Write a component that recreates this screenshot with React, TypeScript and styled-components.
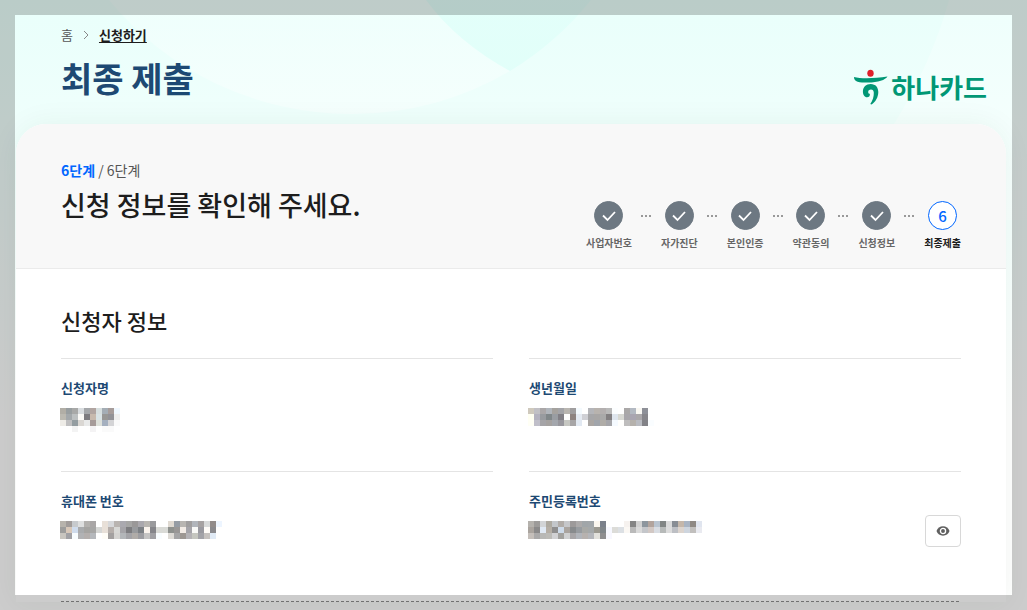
import React from "react";
import styled, { createGlobalStyle } from "styled-components";

const GlobalStyle = createGlobalStyle`
  *, *::before, *::after { box-sizing: border-box; }
  body {
    margin: 0;
    background: #fff;
    color: #1d1d1d;
    font-family: "Noto Sans CJK KR", "Noto Sans", sans-serif;
  }
  h1, h2, h3, p, ol, dl, dd { margin: 0; padding: 0; }
`;

const Page = styled.div`
  position: relative;
  min-height: 100vh;
  overflow: hidden;
  background: linear-gradient(#e9fffb 0, #effffc 120px, #ffffff 420px);
`;

const Backdrop = styled.svg`
  position: absolute;
  top: 0;
  left: 0;
`;

const Frame = styled.div`
  position: fixed;
  inset: 0;
  border: 15px solid rgba(0, 0, 0, 0.2);
  pointer-events: none;
`;

const Header = styled.header`
  position: relative;
  display: flex;
  justify-content: space-between;
  align-items: flex-end;
  padding: 25px 40px 18px 61px;
`;

const Crumbs = styled.nav`
  display: flex;
  align-items: center;
  gap: 8px;
  font-size: 13px;
  line-height: 20px;
`;

const CrumbLink = styled.a<{ $current?: boolean }>`
  color: ${(p) => (p.$current ? "#1d1d1d" : "#555")};
  font-weight: ${(p) => (p.$current ? 700 : 400)};
  text-decoration: ${(p) => (p.$current ? "underline" : "none")};
  text-underline-offset: 2px;
`;

const PageTitle = styled.h1`
  margin: 7px 0 2px;
  color: #1d4973;
  font-size: 34px;
  line-height: 52px;
  font-weight: 700;
`;

const Logo = styled.a`
  display: flex;
  align-items: center;
  gap: 3px;
  color: #009775;
  font-size: 26px;
  line-height: 38px;
  font-weight: 700;
  text-decoration: none;
`;

const Card = styled.main`
  position: relative;
  margin: 0 21px 0 16px;
  border-radius: 30px 30px 0 0;
  background: #fff;
  box-shadow: 0 0 30px rgba(0, 60, 40, 0.06);
`;

const StepHeader = styled.section`
  display: flex;
  justify-content: space-between;
  align-items: flex-end;
  padding: 35px 45px 17px;
  border-bottom: 1px solid #ebebeb;
  border-radius: 30px 30px 0 0;
  background: #f8f8f8;
`;

const StepCopy = styled.div`
  padding-bottom: 26px;
`;

const StepCount = styled.p`
  color: #555;
  font-size: 14px;
  line-height: 22px;

  strong {
    color: #0066ff;
    font-weight: 700;
  }
`;

const StepTitle = styled.h2`
  margin-top: 3px;
  font-size: 27px;
  line-height: 41px;
  font-weight: 500;
`;

const Steps = styled.ol`
  display: flex;
  list-style: none;
`;

const Step = styled.li<{ $current: boolean }>`
  display: flex;
  flex-direction: column;
  align-items: center;
  gap: 5px;
  color: ${(p) => (p.$current ? "#1d1d1d" : "#666")};
  font-size: 10px;
  line-height: 16px;
  font-weight: 700;
  white-space: nowrap;
`;

const StepMark = styled.span<{ $current: boolean }>`
  display: flex;
  align-items: center;
  justify-content: center;
  width: 29px;
  height: 29px;
  border: 1px solid ${(p) => (p.$current ? "#0066ff" : "#6d7882")};
  border-radius: 50%;
  background: ${(p) => (p.$current ? "#fff" : "#6d7882")};
  color: #0066ff;
  font-size: 15px;
  font-weight: 500;
`;

const StepDots = styled.li`
  display: flex;
  align-items: center;
  height: 29px;
  margin: 0 10px 0 9px;
`;

const Content = styled.section`
  padding: 34px 45px 0;
`;

const SectionTitle = styled.h3`
  font-size: 22px;
  line-height: 34px;
  font-weight: 500;
`;

const InfoGrid = styled.dl`
  display: grid;
  grid-template-columns: 1fr 1fr;
  column-gap: 36px;
  margin-top: 21px;
`;

const InfoItem = styled.div`
  height: 113px;
  padding-top: 19px;
  border-top: 1px solid #e4e4e4;
`;

const InfoLabel = styled.dt`
  color: #1d4973;
  font-size: 13px;
  line-height: 20px;
  font-weight: 700;
`;

const InfoValue = styled.dd`
  display: flex;
  justify-content: space-between;
  align-items: flex-start;
  padding-top: 4px;
`;

const MaskArt = styled.svg`
  display: block;
  margin: 6px 0 0 -1px;
`;

const RevealButton = styled.button`
  display: flex;
  align-items: center;
  justify-content: center;
  width: 36px;
  height: 32px;
  padding: 0;
  border: 1px solid #d8d8d8;
  border-radius: 4px;
  background: #fff;
  cursor: pointer;
`;

const Divider = styled.div`
  height: 1px;
  margin: 17px 45px 8px;
  background: repeating-linear-gradient(90deg, #8e8e8e 0 3px, transparent 3px 5px);
`;

const CELL = 6;

type Mosaic = string[];

const NAME: Mosaic = [
  "b1aea6 989ea0 a8a9a8 d9dde0 a4a7aa b1a5a1 d7dfdf a4adb5 a69c9a f0f8ff",
  "bbb9b1 a3a8ab bcc0c1 fbfaf7 7d7c80 c7b9ad d9e3e5 989795 929297 eeeeee",
  "eeece7 bfbfc0 949da1 dad7d3 e9eaea a69b99 dde0da a5b0bf d4d4d6 fafafa",
  "ffffff ffffff f3f3f3 ffffff ffffff f4f3f4 ffffff fafafa fafafa ffffff",
];

const BIRTH: Mosaic = [
  "cfc9bd c1c0c5 aaa7a8 b0b5bb a5a29e a3a4a8 b9b6b1 a09e9f f4fafe ffffff b4b5b9 b8b3ae b3afaf b9b9b9 fcfeff ffffff aaa8a8 b3b9c2 f9f7f2 8e9098 ffffff",
  "fffff2 b4b2bf 989b9f 808789 999da2 817f85 fefefe 8e8380 e5ebf3 cfd0d5 a6a6a8 a8a6a5 a9a9a9 827f81 dfe6ee d8d9d3 a9a7ab a9a5b1 aaa7aa 87868b ffffff",
  "fffff5 c0bfc9 a5a4a7 a5a2a0 a4a7ad 98979d c6c7c2 a7a5a6 e2e9f2 ffffff aaa6a3 a1a5ab afaca7 a5a5a9 f5faff fffffd bebdbd b5b1ac b9bbc1 828287 fafdff",
];

const PHONE: Mosaic = [
  "b7b3ac a19c9a c7cacd dedfdf b3b1ae a9a6a6 ffffff e8e0d8 d7d8da b9b4b0 aaa9af a6a6a5 9a9898 aaa8ad b9b6b1 9a9a9d ffffff ffffff e0dad2 959ca4 b8b5b1 a09e9e b1b5bb a6a2a2 d8dada 918b8a edf5ff",
  "9d9d9c d8c8b9 cfdced a9abad a5a4a1 a6a6a5 d6d7d5 e8e0d8 b6afab d8d8d5 a5a4a8 7d7d80 989a9d 7d8185 fbf4ed 85858a d9dad6 d9dad6 8e918e 999796 f3ece6 a5a4a9 f9f9f7 9a9aa0 fffcf8 89898d ffffff",
  "c8c5bf a1a1a5 f8fdff b1b2b4 b4afad b5b8bc ffffff fffdf7 a3a09f d5d4d1 b3b6b9 a3a3a7 b0aca8 9d9da1 c5c4c3 a0a0a4 f9fdff ffffff dedbd6 a5a5a6 9d9792 b4b2b5 c5c6bf a3a3a8 c6c2bf e0eaf5 ffffff",
];

const RESIDENT: Mosaic = [
  "b5b2ad 9d9b99 d2d4d6 aeaaa1 c3c6ca b1aca8 c6c7ca 9d9a9a acaaaa a1a6a9 a2a7aa fbf7ef 7b818b ffffff ffffff ffffff f6f2ef 858585 d1d1d1 8d969e b2a49d b9c4d0 818584 dadada 888d94 c5b7aa a9b4c3 8f8984 e0e5ef",
  "aaa49e 8a8989 e0e9f4 b5aea5 8f8e8e cedbea aaa49f 888b8d 989ca0 a8a9a6 a5a9aa 9c9a91 80868a f7f8ff dcdcd8 dce0e4 fbf8f4 bababa dadada c4c6ca d2c8c4 d9dde3 b7bab9 dcdcdc bdbfc4 dcd4ce ced5de c1bfbd e9eaf0",
  "c5bfba aaa9a9 b8b8b6 bcbbb7 d1d1d3 a3a29f d0d1d2 a8a6a8 b1b5bb b7b2af b4b6bb e2e1dc 8e8e90 f8f8ff ffffff ffffff ffffff ffffff ffffff ffffff ffffff ffffff ffffff ffffff ffffff ffffff ffffff ffffff ffffff",
];

function MaskedValue({ rows }: { rows: Mosaic }) {
  const cells = rows.map((row) => row.split(" "));
  const width = cells[0].length * CELL;
  const height = rows.length * CELL;
  return (
    <MaskArt
      width={width}
      height={height}
      role="img"
      aria-label="비공개 정보"
      shapeRendering="crispEdges"
    >
      {cells.map((row, y) =>
        row.map((color, x) => (
          <rect
            key={`${x}-${y}`}
            x={x * CELL}
            y={y * CELL}
            width={CELL}
            height={CELL}
            fill={`#${color}`}
          />
        ))
      )}
    </MaskArt>
  );
}

function LogoMark() {
  return (
    <svg width="34" height="36" viewBox="0 0 34 36" aria-hidden="true">
      <ellipse cx="16.500" cy="4.200" rx="3.200" ry="3.500" fill="#e0202b" />
      <path
        d="M0 8C7 10 21 9.500 33.500 7.600C31.500 11 24 13.600 14 13.600C5 13.600 0 13 0 8Z"
        fill="#009775"
      />
      <path
        d="M16.700 15C21.700 15 24.300 18.600 24.300 23C24.300 28.200 21.400 33.200 17.500 35.600L16.300 34.900C18.800 31.400 19.900 27.500 19.800 23.800C19.700 21.600 18.700 20.600 17 20.600C15.300 20.600 14.200 21.500 14.200 22.900C14.200 24.100 14.800 24.900 15.900 24.700C16.100 27 14.900 28.300 13.100 28.300C10.500 28.300 8.900 25.600 8.900 22.500C8.900 18 12.100 15 16.700 15Z"
        fill="#009775"
      />
    </svg>
  );
}

function CheckIcon() {
  return (
    <svg width="16" height="12" viewBox="0 0 16 12" fill="none" role="img" aria-label="완료">
      <path d="M2 5.500L6.500 10L14 2" stroke="#fff" strokeWidth="1.800" />
    </svg>
  );
}

function EyeIcon() {
  return (
    <svg width="14" height="10" viewBox="0 0 14 10" aria-hidden="true">
      <path
        d="M7 0.300C10 0.300 12.500 2.200 13.500 5C12.500 7.800 10 9.700 7 9.700C4 9.700 1.500 7.800 0.500 5C1.500 2.200 4 0.300 7 0.300Z"
        fill="#606060"
      />
      <circle cx="7" cy="5" r="2.600" fill="#606060" stroke="#fff" strokeWidth="1.300" />
    </svg>
  );
}

const STEPS = ["사업자번호", "자가진단", "본인인증", "약관동의", "신청정보", "최종제출"];

const FIELDS = [
  { label: "신청자명", rows: NAME },
  { label: "생년월일", rows: BIRTH },
  { label: "휴대폰 번호", rows: PHONE },
  { label: "주민등록번호", rows: RESIDENT, reveal: true },
];

export default function App() {
  return (
    <>
      <GlobalStyle />
      <Page>
        <Backdrop width="1027" height="220" viewBox="0 0 1027 220" aria-hidden="true">
          <defs>
            <linearGradient id="light" x1="0" y1="0" x2="0" y2="1">
              <stop offset="0" stopColor="#fff" stopOpacity="0.250" />
              <stop offset="1" stopColor="#fff" stopOpacity="0.350" />
            </linearGradient>
            <linearGradient id="mint" x1="0" y1="0" x2="0" y2="1">
              <stop offset="0" stopColor="#d9fff8" stopOpacity="0.400" />
              <stop offset="1" stopColor="#d9fff8" stopOpacity="0.550" />
            </linearGradient>
          </defs>
          <path d="M109 0A313 313 0 0 0 350 114A313 313 0 0 0 510 71Q457 42 426 0Z" fill="url(#light)" />
          <path d="M426 0Q457 42 510 71A313 313 0 0 0 591 0Z" fill="url(#mint)" />
          <path d="M949 0Q932 62 894 124V220H1027V0Z" fill="url(#light)" />
        </Backdrop>
        <Header>
          <div>
            <Crumbs aria-label="현재 위치">
              <CrumbLink href="#home">홈</CrumbLink>
              <svg width="10" height="10" viewBox="0 0 10 10" fill="none" aria-hidden="true">
                <path d="M3 1L7 5L3 9" stroke="#888" />
              </svg>
              <CrumbLink href="#apply" $current aria-current="page">
                신청하기
              </CrumbLink>
            </Crumbs>
            <PageTitle>최종 제출</PageTitle>
          </div>
          <Logo href="#hanacard">
            <LogoMark />
            하나카드
          </Logo>
        </Header>
        <Card>
          <StepHeader>
            <StepCopy>
              <StepCount>
                <strong>6단계</strong> / 6단계
              </StepCount>
              <StepTitle>신청 정보를 확인해 주세요.</StepTitle>
            </StepCopy>
            <Steps>
              {STEPS.map((name, i) => {
                const current = i === STEPS.length - 1;
                return (
                  <React.Fragment key={name}>
                    {i > 0 && (
                      <StepDots aria-hidden="true">
                        <svg width="10" height="2" viewBox="0 0 10 2" fill="#999">
                          <rect width="2" height="2" />
                          <rect x="4" width="2" height="2" />
                          <rect x="8" width="2" height="2" />
                        </svg>
                      </StepDots>
                    )}
                    <Step $current={current} aria-current={current ? "step" : undefined}>
                      <StepMark $current={current}>{current ? i + 1 : <CheckIcon />}</StepMark>
                      {name}
                    </Step>
                  </React.Fragment>
                );
              })}
            </Steps>
          </StepHeader>
          <Content>
            <SectionTitle>신청자 정보</SectionTitle>
            <InfoGrid>
              {FIELDS.map((field) => (
                <InfoItem key={field.label}>
                  <InfoLabel>{field.label}</InfoLabel>
                  <InfoValue>
                    <MaskedValue rows={field.rows} />
                    {field.reveal && (
                      <RevealButton type="button" aria-label="주민등록번호 보기">
                        <EyeIcon />
                      </RevealButton>
                    )}
                  </InfoValue>
                </InfoItem>
              ))}
            </InfoGrid>
          </Content>
          <Divider />
        </Card>
        <Frame />
      </Page>
    </>
  );
}
